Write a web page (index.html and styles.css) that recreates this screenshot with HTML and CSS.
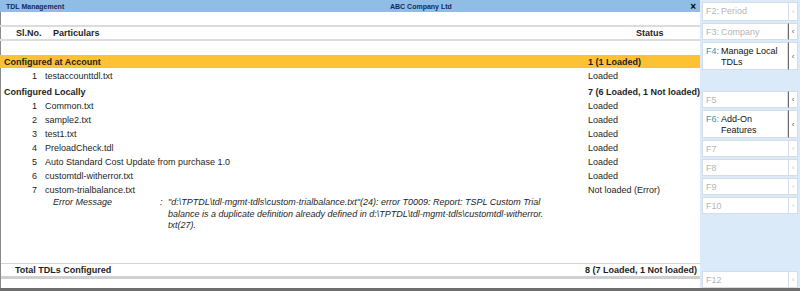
FILE: index.html
```html
<!DOCTYPE html>
<html lang="en">
<head>
  <meta charset="UTF-8" />
  <title>TDL Management</title>
  <link rel="stylesheet" href="styles.css">
</head>
<body>
  <div class="window">
    <div class="main">
      <div class="titlebar">
        <span class="title">TDL Management</span>
        <span class="company">ABC Company Ltd</span>
        <span class="close">×</span>
      </div>

      <div class="report">
        <div class="colhead">
          <span class="h-no">Sl.No.</span>
          <span class="h-name">Particulars</span>
          <span class="h-status">Status</span>
        </div>

        <!-- Configured at Account -->
        <div class="group current">
          <span class="g-name">Configured at Account</span>
          <span class="status">1 (1 Loaded)</span>
        </div>
        <div class="row first">
          <span class="no">1</span><span class="name">testaccounttdl.txt</span><span class="status">Loaded</span>
        </div>

        <!-- Configured Locally -->
        <div class="group">
          <span class="g-name">Configured Locally</span>
          <span class="status">7 (6 Loaded, 1 Not loaded)</span>
        </div>
        <div class="row">
          <span class="no">1</span><span class="name">Common.txt</span><span class="status">Loaded</span>
        </div>
        <div class="row">
          <span class="no">2</span><span class="name">sample2.txt</span><span class="status">Loaded</span>
        </div>
        <div class="row">
          <span class="no">3</span><span class="name">test1.txt</span><span class="status">Loaded</span>
        </div>
        <div class="row">
          <span class="no">4</span><span class="name">PreloadCheck.tdl</span><span class="status">Loaded</span>
        </div>
        <div class="row">
          <span class="no">5</span><span class="name">Auto Standard Cost Update from purchase 1.0</span><span class="status">Loaded</span>
        </div>
        <div class="row">
          <span class="no">6</span><span class="name">customtdl-witherror.txt</span><span class="status">Loaded</span>
        </div>
        <div class="row">
          <span class="no">7</span><span class="name">custom-trialbalance.txt</span><span class="status">Not loaded (Error)</span>
        </div>
        <div class="error">
          <span class="err-label">Error Message</span>
          <span class="err-colon">:</span>
          <span class="err-text">"d:\TPTDL\tdl-mgmt-tdls\custom-trialbalance.txt"(24): error T0009: Report: TSPL Custom Trial<br>balance is a duplicate definition already defined in d:\TPTDL\tdl-mgmt-tdls\customtdl-witherror.<br>txt(27).</span>
        </div>

        <div class="filler"></div>

        <div class="total">
          <span class="t-name">Total TDLs Configured</span>
          <span class="t-status">8 (7 Loaded, 1 Not loaded)</span>
        </div>
      </div>
    </div>

    <!-- Button bar -->
    <div class="keys">
      <div class="key tall-1"><span class="k-main"><b>F2:</b>Period</span><span class="k-side">‹</span></div>
      <div class="key"><span class="k-main"><b>F3:</b>Company</span><span class="k-side on">‹</span></div>
      <div class="key double active"><span class="k-main"><b>F4:</b><span>Manage Local TDLs</span></span><span class="k-side on">‹</span></div>
      <div class="key gap"><span class="k-main"><b>F5</b></span><span class="k-side on">‹</span></div>
      <div class="key double active"><span class="k-main"><b>F6:</b><span>Add-On Features</span></span><span class="k-side on">‹</span></div>
      <div class="key"><span class="k-main"><b>F7</b></span><span class="k-side">‹</span></div>
      <div class="key"><span class="k-main"><b>F8</b></span><span class="k-side">‹</span></div>
      <div class="key"><span class="k-main"><b>F9</b></span><span class="k-side">‹</span></div>
      <div class="key"><span class="k-main"><b>F10</b></span><span class="k-side">‹</span></div>
      <div class="key bottom"><span class="k-main"><b>F12</b></span><span class="k-side">‹</span></div>
    </div>
  </div>
</body>
</html>
```

FILE: styles.css
```css
body {
  margin: 0;
  font-family: "Liberation Sans", Arial, sans-serif;
  font-size: 9px;
  color: #1e1e1e;
  background: #fff;
}
.window {
  display: flex;
  width: 800px;
  height: 291px;
  overflow: hidden;
  border-bottom: 3px solid #6e6e6e;
  box-sizing: border-box;
}

/* left: report */
.main {
  width: 700px;
  display: flex;
  flex-direction: column;
}
.titlebar {
  height: 12px;
  background: #8fbde6;
  display: flex;
  align-items: center;
  font-size: 7px;
  font-weight: bold;
  color: #142a5c;
}
.title {
  width: 390px;
  padding-left: 6px;
  box-sizing: border-box;
}
.close {
  margin-left: auto;
  margin-right: 4px;
  font-size: 10px;
  color: #000;
}
.report {
  flex: 1;
  display: flex;
  flex-direction: column;
  border-left: 1px solid #8a8a8a;
  padding-top: 13px;
}
.colhead {
  display: flex;
  align-items: center;
  height: 12px;
  border-top: 2px solid #dcdcdc;
  border-bottom: 2px solid #dcdcdc;
  font-weight: bold;
  margin-left: -1px;
}
.h-no {
  width: 53px;
  padding-left: 16px;
  box-sizing: border-box;
}
.h-name {
  flex: 1;
}
.h-status {
  width: 64px;
}
.group {
  display: flex;
  align-items: center;
  height: 14px;
  margin-top: 2px;
  font-weight: bold;
}
.group.current {
  margin-top: 14px;
  height: 13px;
  background: #fcc234;
  margin-left: -1px;
  padding-left: 1px;
}
.g-name {
  flex: 1;
  padding-left: 3px;
}
.status {
  width: 112px;
}
.row {
  display: flex;
  align-items: center;
  height: 14px;
}
.row.first {
  margin-top: 1px;
}
.no {
  width: 36px;
  text-align: right;
}
.name {
  flex: 1;
  padding-left: 8px;
}
.error {
  display: flex;
  font-style: italic;
  line-height: 11.5px;
  padding-left: 52px;
}
.err-label {
  width: 107px;
}
.err-colon {
  width: 8px;
}
.filler {
  flex: 1;
}
.total {
  display: flex;
  align-items: center;
  height: 12px;
  border-top: 1px solid #d4d4d4;
  border-bottom: 3px solid #cfcfcf;
  margin-bottom: 9px;
  font-weight: bold;
}
.t-name {
  flex: 1;
  padding-left: 14px;
}
.t-status {
  padding-right: 3px;
}

/* right: button bar */
.keys {
  width: 100px;
  background: #dbeaf8;
  display: flex;
  flex-direction: column;
  gap: 2px;
  padding: 2px 2px 0 2px;
  box-sizing: border-box;
}
.key {
  display: flex;
  height: 17px;
  color: #b5b5b5;
}
.key.tall-1 {
  height: 19px;
}
.key.double {
  height: 28px;
}
.key.gap {
  margin-top: 19px;
}
.key.bottom {
  margin-top: auto;
}
.k-main {
  flex: 1;
  display: flex;
  background: #fff;
  border: 1px solid #d5dde6;
  padding: 3px 0 0 3px;
  line-height: 11px;
}
.k-main b {
  font-weight: normal;
  margin-right: 2px;
}
.key.active .k-main {
  color: #111;
}
.key.active .k-main b {
  color: #4b8ea5;
}
.k-side {
  width: 8px;
  background: #fff;
  border: 1px solid #d5dde6;
  border-left: none;
  font-size: 8px;
  color: #d0d0d0;
  display: flex;
  align-items: center;
  justify-content: center;
}
.k-side.on {
  color: #555;
  border-left: 1px solid #6a6a6a;
}
```
